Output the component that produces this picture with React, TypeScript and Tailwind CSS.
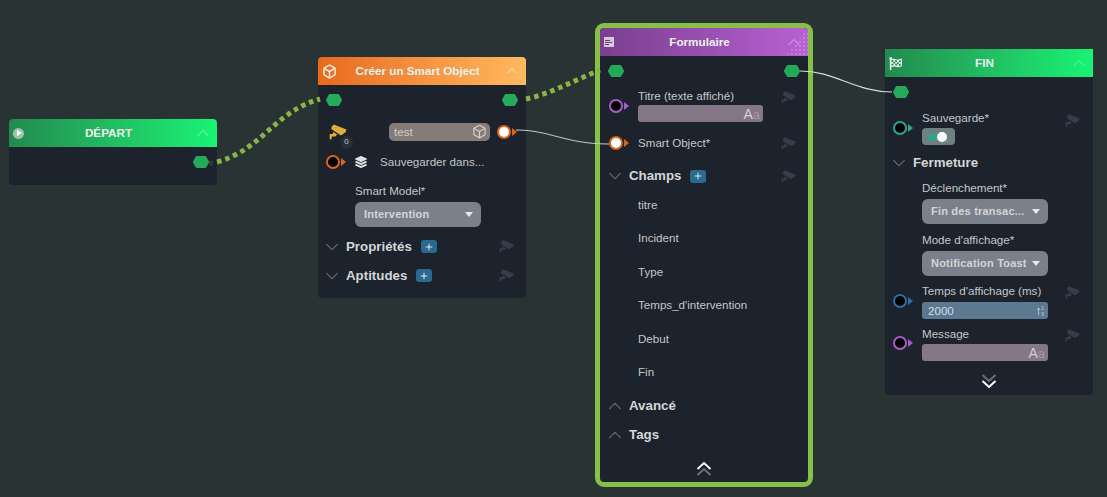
import React from 'react'
import { Box, ChevronDown, ChevronUp, Plus } from 'lucide-react'
import { FaFlagCheckered, FaLayerGroup } from 'react-icons/fa'

function Camera({ className = 'w-[15px] h-[15px] text-[#363d48]' }: { className?: string }) {
  return (
    <svg viewBox="0 0 16 16" className={className} fill="currentColor">
      <path d="M2.5 3 4.2 1.4 15.4 5.8 15 8 10.6 11 2 5.4Z" />
      <path d="M4 8 7.2 10.2 5.8 12H2.4V14.4H.6V9.8H3.2Z" />
    </svg>
  )
}

function Hex() {
  return (
    <svg viewBox="0 0 16 12" className="w-4 h-3">
      <polygon points="4,1.500 12,1.500 14.500,6 12,10.500 4,10.500 1.500,6" fill="#25a95b" stroke="#25a95b" strokeWidth="3" strokeLinejoin="round" />
    </svg>
  )
}

function DoubleChevron({ up }: { up: boolean }) {
  return (
    <svg viewBox="0 0 16 16" className="w-4 h-4" fill="none" strokeWidth="2">
      {up ? (
        <>
          <path d="M1.500 15 8 9 14.500 15" stroke="#6a7077" />
          <path d="M1.500 9 8 3 14.500 9" stroke="#ffffff" />
        </>
      ) : (
        <>
          <path d="M1.500 1 8 7 14.500 1" stroke="#6a7077" />
          <path d="M1.500 7 8 13 14.500 7" stroke="#ffffff" />
        </>
      )}
    </svg>
  )
}

const portStyles = {
  orange: { ring: 'border-[#d9661f]', arrow: 'border-l-[#d9661f]' },
  purple: { ring: 'border-[#a85cc4]', arrow: 'border-l-[#a85cc4]' },
  teal: { ring: 'border-[#2fa58e]', arrow: 'border-l-[#2fa58e]' },
  blue: { ring: 'border-[#2c6da3]', arrow: 'border-l-[#2c6da3]' },
}

function Port({ color, filled = false }: { color: keyof typeof portStyles; filled?: boolean }) {
  const s = portStyles[color]
  return (
    <span className="flex items-center gap-[1px]">
      <span className={`block w-[14px] h-[14px] rounded-full border-2 ${s.ring} ${filled ? 'bg-white' : 'bg-black'}`} />
      <span className={`block w-0 h-0 border-y-[4px] border-y-transparent border-l-[5px] ${s.arrow}`} />
    </span>
  )
}

function Header({ title, gradient, icon, chevron = 'text-white/30', children }: { title: string; gradient: string; icon: React.ReactNode; chevron?: string; children?: React.ReactNode }) {
  return (
    <div className={`relative h-[28px] flex items-center ${gradient}`}>
      <div className="w-[20px] pl-[4px] flex items-center shrink-0">{icon}</div>
      <div className="flex-1 text-center text-[11.7px] font-bold text-[#eef3ef] pr-[5px]">{title}</div>
      <ChevronUp className={`w-5 h-5 mr-[4px] shrink-0 ${chevron}`} strokeWidth={1.5} />
      {children}
    </div>
  )
}

function PortRow() {
  return (
    <div className="h-[29px] pt-[1px] flex items-center justify-between px-[8px]">
      <Hex />
      <Hex />
    </div>
  )
}

function PlusBadge() {
  return (
    <span className="w-4 h-[13px] rounded-[3px] bg-[#2a6a8e] flex items-center justify-center ml-[9px]">
      <Plus className="w-[10px] h-[10px] text-white" strokeWidth={2} />
    </span>
  )
}

function Section({ title, open = false, camera = false, badge = false, className }: { title: string; open?: boolean; camera?: boolean; badge?: boolean; className: string }) {
  return (
    <div className={`flex items-center pr-[12px] ${className}`}>
      {open ? (
        <ChevronUp className="w-[22px] h-[22px] text-[#5b626b] mr-[3px] shrink-0" strokeWidth={1.2} />
      ) : (
        <ChevronDown className="w-[22px] h-[22px] text-[#5b626b] mr-[3px] shrink-0" strokeWidth={1.2} />
      )}
      <span className="text-[13.3px] font-bold text-[#d5d6d8]">{title}</span>
      {badge && <PlusBadge />}
      {camera && (
        <span className="ml-auto">
          <Camera />
        </span>
      )}
    </div>
  )
}

function TextAffix() {
  return (
    <span className="ml-auto flex items-baseline text-[#d5d0d8]">
      <span className="text-[14px] leading-none">A</span>
      <span className="text-[13px] leading-none text-[#a498a8]">a</span>
    </span>
  )
}

function Select({ value }: { value: string }) {
  return (
    <div className="w-[126px] h-[25px] rounded-[6px] bg-[#7b818a] flex items-center pl-[9px] pr-[8px]">
      <span className="text-[11px] font-bold text-[#d3d5d8] whitespace-nowrap tracking-[0.2px]">{value}</span>
      <span className="ml-auto w-0 h-0 border-x-[4.5px] border-x-transparent border-t-[5px] border-t-[#e8e9ea]" />
    </div>
  )
}

function Label({ children }: { children: React.ReactNode }) {
  return <div className="text-[11.6px] leading-[14px] text-[#c4c7ca] whitespace-nowrap">{children}</div>
}

function Item({ children }: { children: React.ReactNode }) {
  return <div className="h-[33.4px] flex items-center pl-[38px] text-[11.6px] text-[#c4c7ca]">{children}</div>
}

function Depart() {
  return (
    <div className="absolute left-[9px] top-[119px] w-[208px] h-[66px] rounded-[4px] bg-[#1c232d] overflow-hidden">
      <Header
        title="DÉPART"
        gradient="bg-gradient-to-r from-[#228a4f] to-[#17f474]"
        icon={
          <span className="w-[11px] h-[11px] rounded-full bg-[#9fc3ac] flex items-center justify-center">
            <span className="w-0 h-0 border-y-[3px] border-y-transparent border-l-[5px] border-l-white ml-[1px]" />
          </span>
        }
      />
      <div className="h-[28px] pt-[2px] flex items-center justify-end pr-[8px]">
        <Hex />
      </div>
    </div>
  )
}

function SmartObject() {
  return (
    <div className="absolute left-[318px] top-[57px] w-[208px] h-[241px] rounded-[4px] bg-[#1c232d] overflow-hidden">
      <Header
        title="Créer un Smart Object"
        gradient="bg-gradient-to-r from-[#e8691c] to-[#ffb95e]"
        icon={<Box className="w-[15px] h-[15px] text-[#f8ece2]" strokeWidth={2.4} />}
        chevron="text-white/40"
      />
      <PortRow />
      <div className="h-[34px] flex items-center pl-[11px] pt-[1px]">
        <span className="relative w-[19px]">
          <Camera className="w-[18px] h-[18px] text-[#e0ad3a]" />
          <span className="absolute left-[11px] top-[13px] w-[13px] h-[13px] rounded-full bg-[#262e38] text-[8px] text-[#c4c7ca] flex items-center justify-center">0</span>
        </span>
        <div className="ml-[41px] w-[101px] h-[18px] rounded-[5px] bg-[#857c77] flex items-center pl-[5px] pr-[3px] text-[11.6px] text-[#d0ccc9]">
          test
          <Box className="ml-auto w-[15px] h-[15px] text-[#d8d4d2]" strokeWidth={1.8} />
        </div>
        <span className="ml-[7px]">
          <Port color="orange" filled />
        </span>
      </div>
      <div className="h-[28px] flex items-center pl-[8px]">
        <Port color="orange" />
        <FaLayerGroup className="ml-[9px] w-[12px] h-[12px] text-[#dfe1e3]" />
        <span className="ml-[13px] text-[11.6px] text-[#c4c7ca] whitespace-nowrap">Sauvegarder dans...</span>
      </div>
      <div className="pl-[37px] pt-[8px] h-[56px]">
        <Label>Smart Model*</Label>
        <div className="mt-[4px]">
          <Select value="Intervention" />
        </div>
      </div>
      <Section title="Propriétés" badge camera className="h-[29px] pl-[3px]" />
      <Section title="Aptitudes" badge camera className="h-[29px] pl-[3px]" />
    </div>
  )
}

function Formulaire() {
  return (
    <div className="absolute left-[595px] top-[23px] w-[218px] h-[464px] rounded-[9px] border-[5px] border-[#88bf49] bg-[#1c232d] overflow-hidden">
      <Header
        title="Formulaire"
        gradient="bg-gradient-to-r from-[#7a3f8e] to-[#b861d4]"
        icon={
          <span className="w-[10px] h-[10px] bg-[#d8c8de] flex flex-col justify-center gap-[1px] px-[1px]">
            <span className="h-[1px] w-[5px] bg-[#6e3a80]" />
            <span className="h-[1px] w-[7px] bg-[#6e3a80]" />
            <span className="h-[1px] w-[4px] bg-[#6e3a80]" />
          </span>
        }
      >
        <span className="absolute right-0 top-0 w-[22px] h-[28px] bg-[radial-gradient(#ffffff30_1px,transparent_1px)] bg-[length:4px_4px] [clip-path:polygon(100%_0,100%_100%,0_100%)]" />
      </Header>
      <PortRow />
      <div className="h-[43px] flex pl-[9px] pr-[12px] pt-[4px]">
        <div className="w-[29px] pt-[10px] shrink-0">
          <Port color="purple" />
        </div>
        <div>
          <Label>Titre (texte affiché)</Label>
          <div className="mt-[2px] w-[125px] h-[17px] rounded-[3px] bg-[#857788] flex items-center pr-[3px]">
            <TextAffix />
          </div>
        </div>
        <span className="ml-auto pt-[1px]">
          <Camera />
        </span>
      </div>
      <div className="h-[30px] flex items-center pl-[9px] pr-[12px]">
        <span className="w-[29px] shrink-0">
          <Port color="orange" filled />
        </span>
        <Label>Smart Object*</Label>
        <span className="ml-auto">
          <Camera />
        </span>
      </div>
      <Section title="Champs" badge camera className="h-[30px] pt-[6px] pl-[4px]" />
      <Item>titre</Item>
      <Item>Incident</Item>
      <Item>Type</Item>
      <Item>Temps_d'intervention</Item>
      <Item>Debut</Item>
      <Item>Fin</Item>
      <Section title="Avancé" open className="h-[34px] pt-[2px] pl-[4px]" />
      <Section title="Tags" open className="h-[25px] pl-[4px]" />
      <div className="h-[39px] pt-[2px] flex items-center justify-center">
        <DoubleChevron up />
      </div>
    </div>
  )
}

function Fin() {
  return (
    <div className="absolute left-[885px] top-[49px] w-[208px] h-[346px] rounded-[4px] bg-[#1c232d]">
      <Header
        title="FIN"
        gradient="bg-gradient-to-r from-[#228a4f] to-[#17f474]"
        icon={<FaFlagCheckered className="w-[13px] h-[13px] text-[#e8efe9]" />}
        chevron="text-white/20"
      />
      <div className="h-[30px] flex items-center pl-[8px]">
        <Hex />
      </div>
      <div className="h-[42px] flex pl-[8px] pr-[13px] pt-[4px]">
        <div className="w-[29px] pt-[10px] shrink-0">
          <Port color="teal" />
        </div>
        <div>
          <Label>Sauvegarde*</Label>
          <div className="mt-[3px] w-[33px] h-[17px] rounded-[4px] bg-[#6b827f] flex items-center pl-[6px]">
            <span className="w-[10px] h-[6px] rounded-l-full bg-[#2fa58e]" />
            <span className="w-[10px] h-[10px] rounded-full bg-white -ml-[1px]" />
          </div>
        </div>
        <span className="ml-auto pt-[2px]">
          <Camera />
        </span>
      </div>
      <Section title="Fermeture" className="h-[26px] pt-[2px] pl-[3px]" />
      <div className="pl-[37px] pt-[6px] h-[52px]">
        <Label>Déclenchement*</Label>
        <div className="mt-[4px]">
          <Select value="Fin des transac..." />
        </div>
      </div>
      <div className="pl-[37px] pt-[6px] h-[54px]">
        <Label>Mode d'affichage*</Label>
        <div className="mt-[4px]">
          <Select value="Notification Toast" />
        </div>
      </div>
      <div className="h-[43px] flex pl-[8px] pr-[13px] pt-[3px]">
        <div className="w-[29px] pt-[10px] shrink-0">
          <Port color="blue" />
        </div>
        <div>
          <Label>Temps d'affichage (ms)</Label>
          <div className="mt-[4px] w-[126px] h-[17px] rounded-[3px] bg-[#5d7891] flex items-center pl-[6px] pr-[4px] text-[11.6px] text-[#d3dae1]">
            2000
            <span className="ml-auto flex items-center text-[#e4e8ec]">
              <span className="text-[12px] font-bold leading-none">↑</span>
              <span className="text-[5px] leading-[6px] flex flex-col text-[#c0cad4]">
                <span>1</span>
                <span>9</span>
              </span>
            </span>
          </div>
        </div>
        <span className="ml-auto pt-[1px]">
          <Camera />
        </span>
      </div>
      <div className="h-[43px] flex pl-[8px] pr-[13px] pt-[3px]">
        <div className="w-[29px] pt-[9px] shrink-0">
          <Port color="purple" />
        </div>
        <div>
          <Label>Message</Label>
          <div className="mt-[3px] w-[126px] h-[17px] rounded-[3px] bg-[#857788] flex items-center pr-[3px]">
            <TextAffix />
          </div>
        </div>
        <span className="ml-auto pt-[1px]">
          <Camera />
        </span>
      </div>
      <div className="h-[30px] flex items-center justify-center">
        <DoubleChevron up={false} />
      </div>
    </div>
  )
}

export default function App() {
  return (
    <div className="relative w-[1107px] h-[497px] overflow-hidden bg-[#2a3333] font-['Liberation_Sans',Arial,sans-serif]">
      <Depart />
      <SmartObject />
      <Formulaire />
      <Fin />
      <svg className="absolute left-0 top-0 w-[1107px] h-[497px] pointer-events-none" viewBox="0 0 1107 497" fill="none">
        <path d="M209 163 H217" stroke="#2f3d33" strokeWidth="5" strokeDasharray="4 4" />
        <path d="M217 162 C 262 150, 275 111, 320 99" stroke="#8ab446" strokeWidth="5" strokeDasharray="4.5 4" />
        <path d="M526 99 C 550 94, 575 80, 600 70" stroke="#8ab446" strokeWidth="5" strokeDasharray="4.5 4" />
        <path d="M800 71 C 835 71, 855 92, 892 92" stroke="#d8dadb" strokeWidth="1.2" />
        <path d="M516 130 C 550 130, 565 144, 609 144" stroke="#c9cbcc" strokeWidth="1" />
      </svg>
    </div>
  )
}
